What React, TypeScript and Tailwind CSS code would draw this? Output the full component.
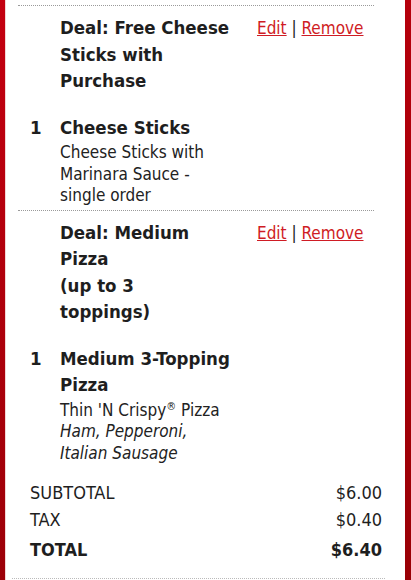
const font = { fontFamily: '"DejaVu Sans Condensed", "DejaVu Sans", sans-serif' };

type Deal = {
  title: React.ReactNode;
  qty: number;
  name: string;
  desc: React.ReactNode;
};

const deals: Deal[] = [
  {
    title: "Deal: Free Cheese Sticks with Purchase",
    qty: 1,
    name: "Cheese Sticks",
    desc: <p>Cheese Sticks with Marinara Sauce - single order</p>,
  },
  {
    title: (
      <>
        Deal: Medium Pizza
        <br />
        (up to 3
        <br />
        toppings)
      </>
    ),
    qty: 1,
    name: "Medium 3-Topping Pizza",
    desc: (
      <>
        <p>
          Thin 'N Crispy<sup className="text-[11px]">®</sup> Pizza
        </p>
        <p className="italic">Ham, Pepperoni, Italian Sausage</p>
      </>
    ),
  },
];

function DealRow({ deal }: { deal: Deal }) {
  return (
    <div className="border-t border-dotted border-[#9a9a9a] pt-[9px] pb-[3px]">
      <div className="flex">
        <div className="w-[42px]" />
        <h3 className="w-[182px] text-[18.5px] leading-[26.5px] font-bold text-[#1e1e1e]">
          {deal.title}
        </h3>
        <div className="pl-[15px] text-[17px] leading-[26px] text-[#222]">
          <a href="#" className="text-[#cf1c24] underline">
            Edit
          </a>{" "}
          |{" "}
          <a href="#" className="text-[#cf1c24] underline">
            Remove
          </a>
        </div>
      </div>
      <div className="mt-[20px] flex">
        <div className="w-[42px] pl-[12px] text-[18.5px] leading-[26.5px] font-bold text-[#1e1e1e]">
          {deal.qty}
        </div>
        <div className="w-[182px]">
          <p className="text-[18.5px] leading-[26.5px] font-bold text-[#1e1e1e]">
            {deal.name}
          </p>
          <div className="max-w-[170px] pt-[1px] text-[17px] leading-[21.5px] text-[#222]">
            {deal.desc}
          </div>
        </div>
      </div>
    </div>
  );
}

export default function App() {
  return (
    <div
      style={font}
      className="flex h-[580px] w-[411px] overflow-hidden bg-white"
    >
      <div className="w-[5px] bg-gradient-to-b from-[#c40010] to-[#9c0008]" />
      <div className="flex flex-1 flex-col border-l border-[#f2d6d6] pt-[5px]">
        <div className="ml-[12px] mr-[31px]">
          {deals.map((d, i) => (
            <DealRow key={i} deal={d} />
          ))}
        </div>
        <div className="mt-[15px] ml-[24px] mr-[23px] flex flex-col gap-[6px] text-[18px] leading-[21px] text-[#1e1e1e]">
          <div className="flex justify-between">
            <span>SUBTOTAL</span>
            <span>$6.00</span>
          </div>
          <div className="flex justify-between">
            <span>TAX</span>
            <span>$0.40</span>
          </div>
          <div className="mt-[3px] flex justify-between font-bold">
            <span>TOTAL</span>
            <span>$6.40</span>
          </div>
        </div>
        <div className="mt-auto mb-[1px] ml-[6px] mr-[20px] border-t border-dotted border-[#bbb]" />
      </div>
      <div className="w-[6px] bg-gradient-to-b from-[#b5000c] to-[#990006]" />
    </div>
  );
}
